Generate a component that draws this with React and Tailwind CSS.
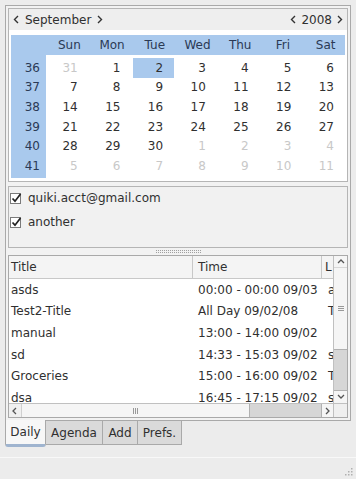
const weeks = [
  { n: 36, days: [[31, 0], [1, 1], [2, 1], [3, 1], [4, 1], [5, 1], [6, 1]] },
  { n: 37, days: [[7, 1], [8, 1], [9, 1], [10, 1], [11, 1], [12, 1], [13, 1]] },
  { n: 38, days: [[14, 1], [15, 1], [16, 1], [17, 1], [18, 1], [19, 1], [20, 1]] },
  { n: 39, days: [[21, 1], [22, 1], [23, 1], [24, 1], [25, 1], [26, 1], [27, 1]] },
  { n: 40, days: [[28, 1], [29, 1], [30, 1], [1, 0], [2, 0], [3, 0], [4, 0]] },
  { n: 41, days: [[5, 0], [6, 0], [7, 0], [8, 0], [9, 0], [10, 0], [11, 0]] },
];

const dayNames = ["Sun", "Mon", "Tue", "Wed", "Thu", "Fri", "Sat"];

const events = [
  ["asds", "00:00 - 00:00 09/03", "a"],
  ["Test2-Title", "All Day 09/02/08", "T"],
  ["manual", "13:00 - 14:00 09/02", ""],
  ["sd", "14:33 - 15:03 09/02", "s"],
  ["Groceries", "15:00 - 16:00 09/02", "T"],
  ["dsa", "16:45 - 17:15 09/02", "s"],
];

const Chev = ({ dir }) => (
  <svg width="6" height="9" viewBox="0 0 6 9">
    <polyline
      points={dir === "left" ? "5,1 1.5,4.5 5,8" : "1,1 4.5,4.5 1,8"}
      fill="none"
      stroke="#333"
      strokeWidth="1.4"
    />
  </svg>
);

const Arrow = ({ dir }) => {
  const pts = {
    up: "1,5 4,2 7,5",
    down: "1,2 4,5 7,2",
    left: "5,1 2,4 5,7",
    right: "2,1 5,4 2,7",
  }[dir];
  return (
    <svg width="8" height="8" viewBox="0 0 8 8">
      <polyline points={pts} fill="none" stroke="#555" strokeWidth="1.3" />
    </svg>
  );
};

const Check = () => (
  <svg width="13" height="13" viewBox="0 0 13 13" className="shrink-0">
    <rect x="0.5" y="1.5" width="10" height="10" fill="#fff" stroke="#7a7a7a" />
    <path d="M2.5 6.5 L5 9.2 L10.5 2" fill="none" stroke="#222" strokeWidth="1.7" />
  </svg>
);

export default function App() {
  return (
    <div className="w-[356px] h-[479px] bg-[#ececec] overflow-hidden text-[12px] text-[#303030] font-['DejaVu_Sans',sans-serif] leading-none">
      <div className="pt-[5px] pl-[5px]">
        {/* tab pane */}
        <div className="w-[346px] h-[416px] border border-[#a9a9a9] bg-[#f2f2f2] p-[2px] flex flex-col">
          {/* calendar */}
          <div className="h-[174px] border border-[#b5b5b5] flex flex-col">
            <div className="h-[21px] bg-[#eeeeee] flex items-center justify-between px-[4px]">
              <div className="flex items-center gap-[6px]">
                <Chev dir="left" />
                <span>September</span>
                <Chev dir="right" />
              </div>
              <div className="flex items-center gap-[5px]">
                <Chev dir="left" />
                <span>2008</span>
                <Chev dir="right" />
              </div>
            </div>
            <div className="flex-1 bg-white pt-[5px] px-[2px]">
              <div className="flex">
                <div className="w-[35px] bg-[#a9c9ed] text-[#2b3a55]">
                  <div className="h-[23px]" />
                  {weeks.map((w) => (
                    <div key={w.n} className="h-[19.6px] flex items-center justify-end pr-[6px]">
                      {w.n}
                    </div>
                  ))}
                  <div className="h-[2px]" />
                </div>
                <div className="flex-1">
                  <div className="h-[20px] bg-[#a9c9ed] grid grid-cols-7 text-[#2b3a55]">
                    {dayNames.map((d) => (
                      <div key={d} className="flex items-center justify-center pl-[4px]">
                        {d}
                      </div>
                    ))}
                  </div>
                  <div className="pt-[3px]">
                    {weeks.map((w) => (
                      <div key={w.n} className="grid grid-cols-7 h-[19.6px]">
                        {w.days.map(([d, cur], i) => (
                          <div
                            key={i}
                            className={`flex items-center justify-end pr-[11px] ${
                              cur ? "text-[#303030]" : "text-[#c8c8c8]"
                            } ${w.n === 36 && d === 2 ? "bg-[#a9c9ed] ml-[2px]" : ""}`}
                          >
                            {d}
                          </div>
                        ))}
                      </div>
                    ))}
                  </div>
                </div>
              </div>
            </div>
          </div>

          {/* accounts */}
          <div className="mt-[4px] h-[62px] border border-[#b5b5b5] bg-[#f1f1f1] flex flex-col gap-[2px] pl-[1px]">
            <div className="h-[22px] flex items-center gap-[5px]">
              <Check />
              <span>quiki.acct@gmail.com</span>
            </div>
            <div className="h-[22px] flex items-center gap-[5px]">
              <Check />
              <span>another</span>
            </div>
          </div>

          {/* splitter */}
          <div className="h-[7px] flex items-center justify-center">
            <div className="w-[45px] h-[3px] border-t border-b border-dotted border-[#a0a0a0]" />
          </div>

          {/* events list */}
          <div className="flex-1 border border-[#a9a9a9] bg-white flex flex-col min-h-0">
            <div className="flex flex-1 min-h-0">
              <div className="flex-1 flex flex-col overflow-hidden">
                <div className="h-[23px] shrink-0 flex bg-[#f4f4f4] border-b border-[#c8c8c8]">
                  <div className="w-[184px] shrink-0 pl-[2px] flex items-center border-r border-[#c8c8c8]">Title</div>
                  <div className="w-[129px] shrink-0 pl-[5px] flex items-center border-r border-[#c8c8c8]">Time</div>
                  <div className="flex-1 pl-[3px] flex items-center overflow-hidden">L</div>
                </div>
                <div className="flex-1 overflow-hidden">
                  {events.map(([t, time, l]) => (
                    <div key={t} className="h-[21.6px] flex items-center">
                      <div className="w-[184px] shrink-0 pl-[2px]">{t}</div>
                      <div className="w-[129px] shrink-0 pl-[5px] whitespace-nowrap">{time}</div>
                      <div className="flex-1 pl-[6px] overflow-hidden">{l}</div>
                    </div>
                  ))}
                </div>
              </div>
              {/* vertical scrollbar */}
              <div className="w-[14px] flex flex-col border-l border-[#c0c0c0] bg-[#d6d6d6]">
                <div className="h-[12px] bg-[#f5f5f5] flex items-center justify-center border-b border-[#d8d8d8]">
                  <Arrow dir="up" />
                </div>
                <div className="h-[82px] bg-[#f5f5f5] border-b border-[#b0b0b0] flex items-center justify-center">
                  <div className="w-[6px] h-[5px] border-t border-b border-[#999] flex items-center">
                    <div className="w-full h-px bg-[#999]" />
                  </div>
                </div>
                <div className="flex-1" />
                <div className="h-[13px] bg-[#f5f5f5] border-t border-[#b0b0b0] flex items-center justify-center">
                  <Arrow dir="down" />
                </div>
              </div>
            </div>
            {/* horizontal scrollbar */}
            <div className="h-[14px] flex shrink-0 border-t border-[#c0c0c0]">
              <div className="w-[13px] bg-[#f0f0f0] border-r border-[#d0d0d0] flex items-center justify-center">
                <Arrow dir="left" />
              </div>
              <div className="w-[228px] bg-[#f5f5f5] border-r border-[#b0b0b0] flex items-center justify-center">
                <div className="w-[5px] h-[6px] border-l border-r border-[#999] flex justify-center">
                  <div className="w-px h-full bg-[#999]" />
                </div>
              </div>
              <div className="w-[71px] bg-[#d6d6d6]" />
              <div className="w-[12px] bg-[#f5f5f5] border-l border-[#b0b0b0] flex items-center justify-center">
                <Arrow dir="right" />
              </div>
              <div className="flex-1 bg-[#efefef] border-l border-[#c0c0c0]" />
            </div>
          </div>
        </div>

        {/* tabs */}
        <div className="flex items-start">
          <div className="-mt-px w-[41px] h-[27px] bg-[#f7f7f7] border-x border-b-[3px] border-[#a9a9a9] border-b-[#9fb4cf] rounded-b-[3px] flex items-center justify-center">
            Daily
          </div>
          <div className="w-[57px] h-[24px] bg-[#dadada] border-r border-b border-[#a9a9a9] flex items-center justify-center">
            Agenda
          </div>
          <div className="w-[35px] h-[24px] bg-[#dadada] border-r border-b border-[#a9a9a9] flex items-center justify-center">
            Add
          </div>
          <div className="w-[44px] h-[24px] bg-[#dadada] border-r border-b border-[#a9a9a9] flex items-center justify-center">
            Prefs.
          </div>
        </div>
      </div>

      {/* status bar */}
      <div className="mt-[10px] h-[21px] border-t border-[#f8f8f8] flex justify-end items-end pr-[3px] pb-[2px]">
        <svg width="10" height="10" viewBox="0 0 10 10">
          {[[8, 2], [8, 5], [8, 8], [5, 5], [5, 8], [2, 8]].map(([x, y], i) => (
            <rect key={i} x={x} y={y} width="1.5" height="1.5" fill="#b0b0b0" />
          ))}
        </svg>
      </div>
    </div>
  );
}
